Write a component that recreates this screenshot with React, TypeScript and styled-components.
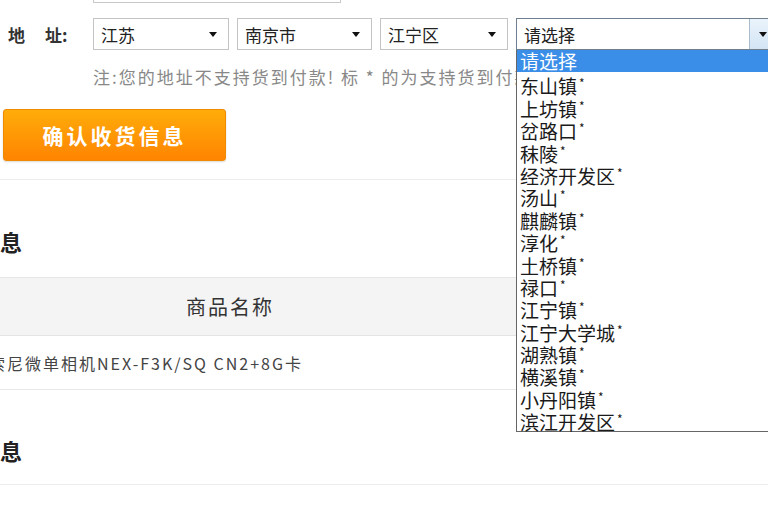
import styled, { createGlobalStyle } from "styled-components";

const GlobalStyle = createGlobalStyle`
  html, body {
    margin: 0;
    padding: 0;
    background: #ffffff;
    overflow: hidden;
  }
  body {
    font-family: "Noto Sans CJK SC", "Liberation Sans", sans-serif;
    color: #333;
  }
`;

const Page = styled.div`
  width: 768px;
  height: 510px;
  overflow: hidden;
  position: relative;
`;

const TopInput = styled.div`
  margin: -8px 0 0 93px;
  width: 246px;
  height: 9px;
  border: 1px solid #c8c8c8;
  background: #fff;
`;

const AddressRow = styled.div`
  display: flex;
  align-items: center;
  margin-top: 15px;
  height: 32px;
`;

const Label = styled.div`
  flex-shrink: 0;
  width: 93px;
  padding-left: 8px;
  box-sizing: border-box;
  display: flex;
  gap: 20px;
  font-size: 17px;
  font-weight: bold;
  color: #333;
  white-space: nowrap;
`;

const Selects = styled.div`
  display: flex;
  align-items: center;
  gap: 8px;
`;

const SelectBox = styled.div<{ $w: number; $open?: boolean }>`
  position: relative;
  flex-shrink: 0;
  width: ${(p) => p.$w}px;
  height: 32px;
  box-sizing: border-box;
  border: 1px solid ${(p) => (p.$open ? "#6f7f8e" : "#c4c4c4")};
  display: flex;
  align-items: center;
  padding-left: 7px;
  font-size: 17px;
  color: #222;
  background: #fff;
`;

const Arrow = styled.span`
  position: absolute;
  right: 11px;
  top: 13px;
  width: 0;
  height: 0;
  border-left: 4px solid transparent;
  border-right: 4px solid transparent;
  border-top: 5px solid #111;
`;

const ArrowButton = styled.div`
  position: absolute;
  right: 0;
  top: 0;
  bottom: 0;
  width: 25px;
  background: linear-gradient(#eaf3fb, #d3e5f5);
  border-left: 1px solid #a9bccd;
  display: flex;
  align-items: center;
  justify-content: center;

  &::after {
    content: "";
    border-left: 4px solid transparent;
    border-right: 4px solid transparent;
    border-top: 5px solid #111;
  }
`;

const DropList = styled.ul`
  position: absolute;
  left: -1px;
  top: 31px;
  width: 260px;
  height: 382px;
  margin: 0;
  padding: 0;
  list-style: none;
  background: #fff;
  border: 1px solid #666;
  border-top: none;
  box-sizing: border-box;
  z-index: 2;
`;

const DropItem = styled.li<{ $active?: boolean }>`
  height: 22.4px;
  line-height: 22px;
  padding-left: 3px;
  font-size: 19px;
  color: ${(p) => (p.$active ? "#fff" : "#1a1a1a")};
  background: ${(p) => (p.$active ? "#3a8ee8" : "transparent")};
  white-space: nowrap;

  sup {
    font-size: 12px;
    vertical-align: 6px;
    margin-left: 2px;
  }
`;

const Note = styled.div`
  margin: 16px 0 0 93px;
  font-size: 17px;
  line-height: 22px;
  letter-spacing: 2px;
  color: #888;
  white-space: nowrap;
`;

const ConfirmButton = styled.button`
  display: block;
  margin: 21px 0 0 3px;
  width: 223px;
  height: 52px;
  border: 1px solid #f08a00;
  border-radius: 3px;
  background: linear-gradient(#ffac0a, #ff8400);
  color: #fff;
  font-family: "Noto Sans CJK SC", sans-serif;
  font-size: 21px;
  font-weight: bold;
  letter-spacing: 3px;
  box-shadow: 0 1px 2px rgba(0, 0, 0, 0.15);
`;

const Divider = styled.div<{ $top: number }>`
  margin-top: ${(p) => p.$top}px;
  height: 1px;
  background: #ececec;
`;

const SectionTitle = styled.h2<{ $top: number }>`
  margin: ${(p) => p.$top}px 0 0 -66px;
  font-size: 22px;
  font-weight: bold;
  line-height: 30px;
  color: #222;
  white-space: nowrap;
`;

const Table = styled.div`
  margin-top: 21px;
  border-top: 1px solid #e6e6e6;
`;

const HeaderRow = styled.div`
  height: 57px;
  background: #f4f4f4;
  border-bottom: 1px solid #e4e4e4;
  display: flex;
  align-items: center;
`;

const HeaderCell = styled.div`
  width: 460px;
  text-align: center;
  font-size: 20px;
  letter-spacing: 2px;
  color: #333;
`;

const BodyRow = styled.div`
  height: 53px;
  border-bottom: 1px solid #e8e8e8;
  display: flex;
  align-items: center;
`;

const BodyCell = styled.div`
  margin-left: -11px;
  font-size: 16px;
  letter-spacing: 2px;
  color: #444;
  white-space: nowrap;
`;

const towns = [
  "东山镇",
  "上坊镇",
  "岔路口",
  "秣陵",
  "经济开发区",
  "汤山",
  "麒麟镇",
  "淳化",
  "土桥镇",
  "禄口",
  "江宁镇",
  "江宁大学城",
  "湖熟镇",
  "横溪镇",
  "小丹阳镇",
  "滨江开发区",
];

function App() {
  return (
    <Page>
      <GlobalStyle />
      <TopInput />
      <AddressRow>
        <Label>
          <span>地</span>
          <span>址:</span>
        </Label>
        <Selects>
          <SelectBox $w={136}>
            江苏
            <Arrow />
          </SelectBox>
          <SelectBox $w={135}>
            南京市
            <Arrow />
          </SelectBox>
          <SelectBox $w={128}>
            江宁区
            <Arrow />
          </SelectBox>
          <SelectBox $w={260} $open>
            请选择
            <ArrowButton />
            <DropList>
              <DropItem $active>请选择</DropItem>
              {towns.map((t) => (
                <DropItem key={t}>
                  {t}
                  <sup>*</sup>
                </DropItem>
              ))}
            </DropList>
          </SelectBox>
        </Selects>
      </AddressRow>
      <Note>注:您的地址不支持货到付款! 标 * 的为支持货到付款的地区</Note>
      <ConfirmButton>确认收货信息</ConfirmButton>
      <Divider $top={18} />
      <SectionTitle $top={46}>商品信息</SectionTitle>
      <Table>
        <HeaderRow>
          <HeaderCell>商品名称</HeaderCell>
        </HeaderRow>
        <BodyRow>
          <BodyCell>索尼微单相机NEX-F3K/SQ CN2+8G卡</BodyCell>
        </BodyRow>
      </Table>
      <SectionTitle $top={45}>支付信息</SectionTitle>
      <Divider $top={19} />
    </Page>
  );
}

export default App;
